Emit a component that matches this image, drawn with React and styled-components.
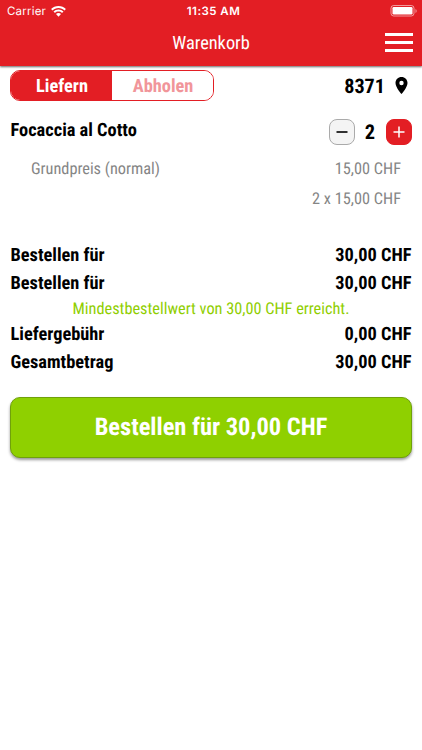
import React, { useState } from "react";
import styled, { createGlobalStyle } from "styled-components";

const GlobalStyle = createGlobalStyle`
  * {
    box-sizing: border-box;
  }

  body {
    margin: 0;
    background: #fff;
    color: #000;
    font-family: "Roboto Condensed", Roboto, sans-serif;
    font-stretch: condensed;
    text-rendering: geometricPrecision;
  }

  button {
    padding: 0;
    font: inherit;
    text-rendering: inherit;
  }
`;

const Screen = styled.div`
  height: 750px;
  overflow: hidden;
`;

const Header = styled.header`
  height: 66px;
  background: #e31e24;
  color: #fff;
  box-shadow: 0 1px 2px rgba(0, 0, 0, 0.6);
`;

const StatusBar = styled.div`
  display: grid;
  grid-template-columns: 1fr auto 1fr;
  align-items: center;
  height: 22px;
  padding: 0 4px 0 7px;
  font-family: Inter, sans-serif;
  font-stretch: normal;
  font-size: 11.5px;
`;

const Carrier = styled.div`
  display: flex;
  align-items: center;
  gap: 5px;
  letter-spacing: 0.2px;
`;

const Time = styled.div`
  padding-left: 2px;
  font-weight: 600;
  font-size: 11.5px;
  letter-spacing: 0.45px;
`;

const Battery = styled.svg`
  justify-self: end;
`;

const NavBar = styled.div`
  display: grid;
  grid-template-columns: 1fr auto 1fr;
  align-items: center;
  height: 41px;
  padding: 0 9px;
`;

const Title = styled.h1`
  grid-column: 2;
  margin: 0;
  padding-top: 2px;
  font-size: 18.35px;
  font-weight: 400;
`;

const Menu = styled.button`
  justify-self: end;
  display: flex;
  flex-direction: column;
  gap: 5px;
  width: 28px;
  border: 0;
  background: none;

  span {
    width: 100%;
    height: 3px;
    background: #fff;
  }
`;

const Content = styled.main`
  padding: 4px 10px 0;
`;

const Row = styled.div`
  display: flex;
  align-items: center;
  justify-content: space-between;
  height: ${p => p.$height || 27.4}px;
  padding: ${p => p.$padding || "0 0.5px"};
  font-size: 18.35px;
  font-weight: 700;
  white-space: nowrap;
`;

const Toggle = styled.div`
  display: flex;
  width: 204px;
  height: 31px;
  border: 1px solid #e31e24;
  border-radius: 10px;
  overflow: hidden;
`;

const ToggleOption = styled.button`
  flex: 1;
  padding: 1px 0 0 1px;
  border: 0;
  background: ${p => (p.$active ? "#e31e24" : "#fff")};
  color: ${p => (p.$active ? "#fff" : "#f1959a")};
  font-size: 18.35px;
`;

const Zip = styled.div`
  display: flex;
  align-items: center;
  gap: 10px;
  padding-right: 4px;
  font-size: 20.2px;
`;

const ItemName = styled.span`
  padding-bottom: 3px;
`;

const Stepper = styled.div`
  display: flex;
  align-items: center;
  font-size: 20.4px;
`;

const Count = styled.span`
  width: 31px;
  text-align: center;
`;

const StepButton = styled.button`
  display: flex;
  align-items: center;
  justify-content: center;
  width: 26px;
  height: 26px;
  border: 1px solid ${p => (p.$primary ? "#e31e24" : "#aaa")};
  border-radius: 8px;
  background: ${p => (p.$primary ? "#e31e24" : "#f4f4f4")};
  color: ${p => (p.$primary ? "#fff" : "#000")};
`;

const Detail = styled(Row)`
  color: #858585;
  font-size: 16.3px;
  font-weight: 400;
`;

const Totals = styled.section`
  margin-top: 21px;
`;

const Notice = styled.p`
  margin: 0;
  height: 24.4px;
  line-height: 24px;
  color: #8fce00;
  font-size: 16.3px;
  text-align: center;
  white-space: nowrap;
`;

const OrderButton = styled.button`
  display: block;
  width: 402px;
  height: 61px;
  margin-top: 20.6px;
  padding-bottom: 1px;
  border: 1px solid #70a10a;
  border-radius: 10px;
  background: #8fd000;
  box-shadow: 0 2px 3px rgba(0, 0, 0, 0.4);
  color: #fff;
  font-size: 24.45px;
  font-weight: 700;
`;

const formatPrice = value => `${value.toFixed(2).replace(".", ",")} CHF`;

const PRICE = 15;

function WifiIcon() {
  return (
    <svg width='15' height='11' viewBox='0 0 15 11' fill='#fff'>
      <path d='M7.5 0C4.6 0 2 1.1 0.1 2.9l1.4 1.5c1.5-1.5 3.6-2.4 6-2.4s4.5.9 6 2.4l1.4-1.5C13 1.1 10.4 0 7.5 0z' />
      <path d='M7.5 3.5c-1.9 0-3.7.8-5 2l1.5 1.5c.9-.9 2.1-1.4 3.5-1.4s2.6.5 3.5 1.4l1.5-1.5c-1.3-1.2-3.1-2-5-2z' />
      <path d='M7.5 7.1c-1 0-1.9.4-2.5 1l2.5 2.6 2.5-2.6c-.6-.6-1.5-1-2.5-1z' />
    </svg>
  );
}

function App() {
  const [delivery, setDelivery] = useState(true);
  const [count, setCount] = useState(2);

  const total = formatPrice(count * PRICE);

  return (
    <Screen>
      <GlobalStyle />
      <Header>
        <StatusBar>
          <Carrier>
            Carrier
            <WifiIcon />
          </Carrier>
          <Time>11:35 AM</Time>
          <Battery width='28' height='12' viewBox='0 0 28 12'>
            <rect
              x='1'
              y='0.5'
              width='23'
              height='10.5'
              rx='2.7'
              fill='none'
              stroke='#fff'
              strokeOpacity='0.55'
            />
            <rect x='2.5' y='2' width='20' height='7.5' rx='1.2' fill='#fff' />
            <path d='M25.5 4v4c1.6-.8 1.6-3.2 0-4z' fill='#fff' opacity='0.55' />
          </Battery>
        </StatusBar>
        <NavBar>
          <Title>Warenkorb</Title>
          <Menu aria-label='Menü'>
            <span />
            <span />
            <span />
          </Menu>
        </NavBar>
      </Header>
      <Content>
        <Row $height={31} $padding='0'>
          <Toggle>
            <ToggleOption $active={delivery} onClick={() => setDelivery(true)}>
              Liefern
            </ToggleOption>
            <ToggleOption
              $active={!delivery}
              onClick={() => setDelivery(false)}
            >
              Abholen
            </ToggleOption>
          </Toggle>
          <Zip>
            8371
            <svg width='13' height='18' viewBox='0 0 13 18'>
              <path
                d='M6.5 0C3.1 0 .5 2.6.5 6c0 4.500 6 11 6 11s6-6.500 6-11c0-3.400-2.600-6-6-6zm0 8.200a2.200 2.200 0 1 1 0-4.400 2.200 2.200 0 0 1 0 4.400z'
                fill='#000'
              />
            </svg>
          </Zip>
        </Row>
        <Row $height={61}>
          <ItemName>Focaccia al Cotto</ItemName>
          <Stepper>
            <StepButton
              aria-label='Weniger'
              onClick={() => setCount(Math.max(0, count - 1))}
            >
              <svg width='12' height='12' viewBox='0 0 12 12'>
                <path d='M0.5 6h11' stroke='currentColor' strokeWidth='1.6' />
              </svg>
            </StepButton>
            <Count>{count}</Count>
            <StepButton
              $primary
              aria-label='Mehr'
              onClick={() => setCount(count + 1)}
            >
              <svg width='12' height='12' viewBox='0 0 12 12'>
                <path
                  d='M0.5 6h11M6 0.5v11'
                  stroke='currentColor'
                  strokeWidth='1.5'
                />
              </svg>
            </StepButton>
          </Stepper>
        </Row>
        <Detail $height={13} $padding='0 11px 0 21px'>
          <span>Grundpreis (normal)</span>
          <span>{formatPrice(PRICE)}</span>
        </Detail>
        <Detail $height={46} $padding='0 11px 0 21px'>
          <span />
          <span>
            {count} x {formatPrice(PRICE)}
          </span>
        </Detail>
        <Totals>
          <Row>
            <span>Bestellen für</span>
            <span>{total}</span>
          </Row>
          <Row>
            <span>Bestellen für</span>
            <span>{total}</span>
          </Row>
          <Notice>Mindestbestellwert von 30,00 CHF erreicht.</Notice>
          <Row>
            <span>Liefergebühr</span>
            <span>{formatPrice(0)}</span>
          </Row>
          <Row>
            <span>Gesamtbetrag</span>
            <span>{total}</span>
          </Row>
        </Totals>
        <OrderButton>Bestellen für {total}</OrderButton>
      </Content>
    </Screen>
  );
}

export default App;
